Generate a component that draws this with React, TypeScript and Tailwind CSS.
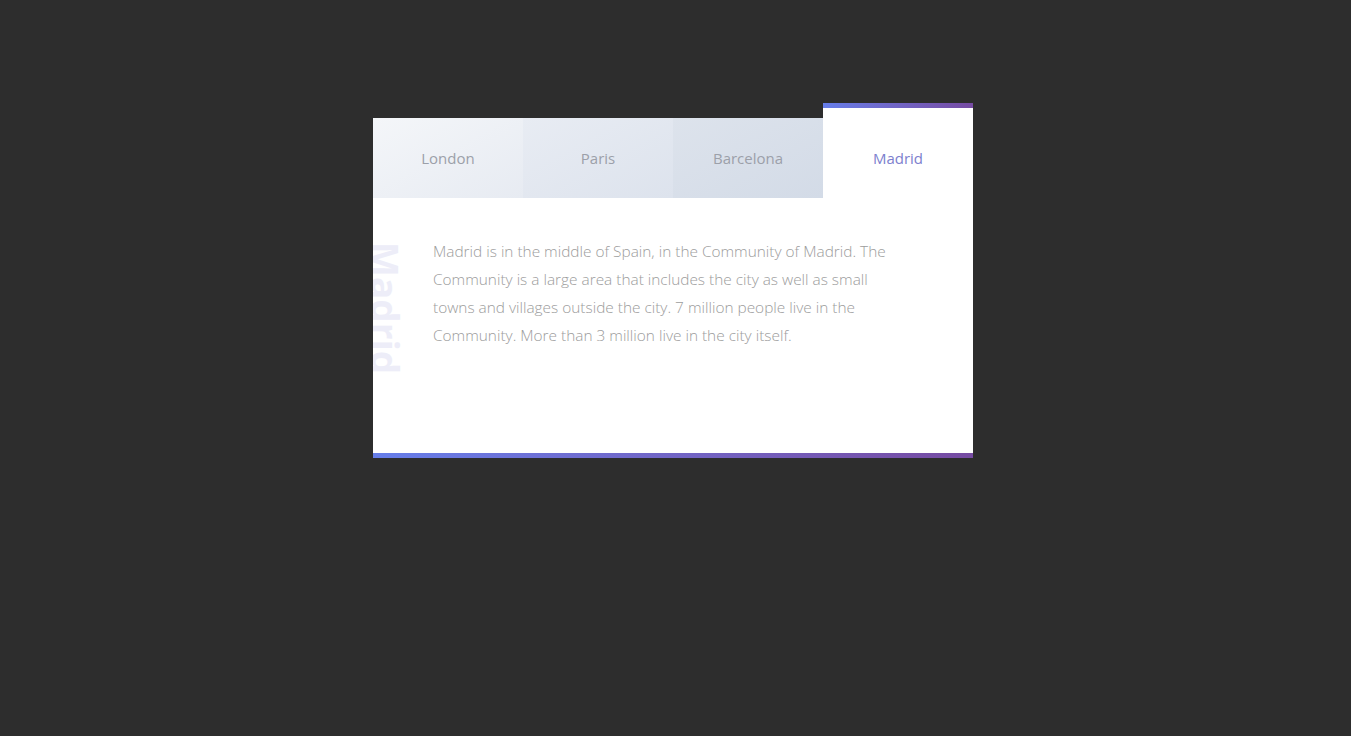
import React, { useState } from 'react';

const cities: { name: string; text: string; bg: string }[] = [
    {
        name: 'London',
        text: 'London is the capital city of England. It is the most populous city in the United Kingdom, with a metropolitan area of over 13 million inhabitants.',
        bg: 'bg-gradient-to-br from-[#f4f6f9] to-[#e7ebf2]',
    },
    {
        name: 'Paris',
        text: 'Paris is the capital of France. The Paris area is one of the largest population centers in Europe, with more than 12 million inhabitants.',
        bg: 'bg-gradient-to-br from-[#e8ecf3] to-[#dde3ed]',
    },
    {
        name: 'Barcelona',
        text: 'Barcelona is the capital and largest city of Catalonia, with a population of 1.6 million within city limits.',
        bg: 'bg-gradient-to-br from-[#dde3ec] to-[#d3dbe7]',
    },
    {
        name: 'Madrid',
        text: 'Madrid is in the middle of Spain, in the Community of Madrid. The Community is a large area that includes the city as well as small towns and villages outside the city. 7 million people live in the Community. More than 3 million live in the city itself.',
        bg: 'bg-white',
    },
];

export default function App() {
    const [active, setActive] = useState(3); // selected tab
    const city = cities[active];

    return (
        <div className="min-h-screen bg-[#2d2d2d] pt-[103px] pl-[373px]" style={{ fontFamily: '"Open Sans", sans-serif' }}>
            <div className="w-[600px]">
                {/* tabs */}
                <div className="flex items-end">
                    {cities.map((c, i) => (
                        <button
                            key={c.name}
                            type="button"
                            onClick={() => setActive(i)}
                            className={
                                i === active
                                    ? 'flex h-[95px] w-[150px] flex-col bg-white'
                                    : `flex h-[80px] w-[150px] flex-col ${c.bg}`
                            }
                        >
                            {i === active && <span className="h-[5px] w-full bg-gradient-to-r from-[#667eea] to-[#764ba2]" />}
                            <span
                                className={
                                    i === active
                                        ? 'flex flex-1 items-center justify-center pt-[10px] text-[15px] text-[#7d7fce]'
                                        : 'flex flex-1 items-center justify-center text-[15px] text-[#9ca0a9]'
                                }
                            >
                                {c.name}
                            </span>
                        </button>
                    ))}
                </div>

                {/* panel */}
                <div className="relative h-[255px] overflow-hidden bg-white">
                    <span
                        className="absolute left-[-10px] top-[44px] text-[37px] font-bold leading-[44px] text-[#ededf8]"
                        style={{ writingMode: 'vertical-rl' }}
                    >
                        {city.name}
                    </span>
                    <p className="box-content w-[462px] pl-[60px] pt-[40px] text-[15.4px] font-light leading-[28px] text-[#9c9c9c]">
                        {city.text}
                    </p>
                </div>
                <div className="h-[5px] bg-gradient-to-r from-[#667eea] to-[#764ba2]" />
            </div>
        </div>
    );
}
